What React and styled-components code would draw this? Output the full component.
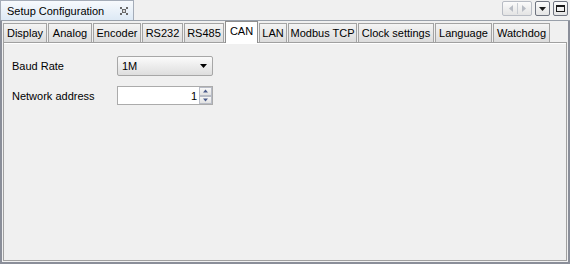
import styled, { createGlobalStyle } from 'styled-components';

const GlobalStyle = createGlobalStyle`
  html, body {
    margin: 0;
    padding: 0;
    background: #f0f0f0;
  }
  body {
    font-family: "Liberation Sans", Arial, sans-serif;
    font-size: 11px;
    color: #000;
  }
`;

const TABS = [
  { label: 'Display', width: 44 },
  { label: 'Analog', width: 44 },
  { label: 'Encoder', width: 48 },
  { label: 'RS232', width: 41 },
  { label: 'RS485', width: 40 },
  { label: 'CAN', width: 33 },
  { label: 'LAN', width: 28 },
  { label: 'Modbus TCP', width: 69 },
  { label: 'Clock settings', width: 76 },
  { label: 'Language', width: 57 },
  { label: 'Watchdog', width: 57 },
];

const StyledView = styled.div`
  display: flex;
  flex-direction: column;
  height: 264px;
  width: 570px;
  box-sizing: border-box;
`;

const StyledHeader = styled.div`
  align-items: flex-end;
  border-bottom: 1px solid #99a0aa;
  display: flex;
  height: 21px;
  box-sizing: border-box;
  justify-content: space-between;
`;

const StyledViewTab = styled.div`
  align-items: center;
  background: linear-gradient(#f7fafd, #dde9f5);
  border: 1px solid #a4acb8;
  border-bottom: none;
  box-sizing: border-box;
  display: flex;
  height: 20px;
  justify-content: space-between;
  padding: 0 5px 0 6px;
  width: 134px;
  white-space: nowrap;
`;

const StyledClose = styled.svg`
  display: block;
`;

const StyledToolbar = styled.div`
  align-self: flex-start;
  display: flex;
  gap: 3px;
  padding: 1px 2px 0 0;
`;

const StyledToolButton = styled.div`
  align-items: center;
  background: linear-gradient(#fbfbfb, #e4e4e4);
  border: 1px solid ${({ $disabled }) => ($disabled ? '#b8bcc4' : '#6f7480')};
  border-radius: 2px;
  box-sizing: border-box;
  display: flex;
  height: 15px;
  justify-content: center;
  width: ${({ $wide }) => ($wide ? '30px' : '15px')};
`;

const StyledDivider = styled.span`
  background: #c8ccd2;
  height: 11px;
  margin: 0 4px;
  width: 1px;
`;

const StyledBody = styled.div`
  border-left: 2px solid #8a8e99;
  border-right: 2px solid #8a8e99;
  border-bottom: 2px solid #8a8e99;
  box-sizing: border-box;
  display: flex;
  flex: 1;
  flex-direction: column;
  padding: 0 1px;
`;

const StyledTabBar = styled.div`
  align-items: flex-end;
  display: flex;
  gap: 1px;
  height: 21px;
`;

const StyledTab = styled.div`
  align-items: center;
  background: ${({ $active }) => ($active ? '#fff' : 'linear-gradient(#f4f4f4, #dcdcdc)')};
  border: 1px solid ${({ $active }) => ($active ? '#8f8f8f' : '#a3a3a3')};
  border-bottom: none;
  box-sizing: border-box;
  display: flex;
  flex-shrink: 0;
  height: ${({ $active }) => ($active ? '22px' : '19px')};
  justify-content: center;
  margin-bottom: ${({ $active }) => ($active ? '-1px' : '0')};
  padding-bottom: ${({ $active }) => ($active ? '3px' : '0')};
  position: relative;
  white-space: nowrap;
  width: ${({ $width }) => $width}px;
  z-index: ${({ $active }) => ($active ? 1 : 0)};
`;

const StyledPanel = styled.div`
  align-content: start;
  background: #f0f0f0;
  border: 1px solid #a0a0a0;
  box-shadow: inset 0 1px 0 #fff;
  box-sizing: border-box;
  display: grid;
  flex: 1;
  grid-auto-rows: 20px;
  grid-template-columns: 105px 96px;
  margin-bottom: 1px;
  padding: 13px 0 0 8px;
  row-gap: 10px;
`;

const StyledLabel = styled.label`
  align-self: center;
`;

const StyledCombo = styled.div`
  align-items: center;
  background: linear-gradient(#fbfbfb, #dedede);
  border: 1px solid #a7a7a7;
  border-radius: 2px;
  box-sizing: border-box;
  display: flex;
  justify-content: space-between;
  padding: 0 5px 0 4px;
`;

const StyledSpinner = styled.div`
  background: #fff;
  border: 1px solid #ababab;
  box-sizing: border-box;
  display: flex;
  height: 19px;
`;

const StyledSpinnerValue = styled.div`
  align-items: center;
  display: flex;
  flex: 1;
  justify-content: flex-end;
  padding-right: 2px;
`;

const StyledSpinnerButtons = styled.div`
  display: flex;
  flex-direction: column;
  width: 13px;
`;

const StyledSpinnerButton = styled.div`
  align-items: center;
  background: linear-gradient(#f8f8f8, #e2e2e2);
  border: 1px solid #b8bcc6;
  box-sizing: border-box;
  display: flex;
  flex: 1;
  justify-content: center;
`;

function Arrow({ dir, color = '#000', size = 7 }) {
  const points = {
    down: '0,0 7,0 3.5,4',
    up: '0,4 7,4 3.5,0',
    left: '4,0 4,7 0,3.5',
    right: '0,0 0,7 4,3.5',
  }[dir];
  const vertical = dir === 'up' || dir === 'down';
  return (
    <svg width={vertical ? size : 4} height={vertical ? 4 : size} viewBox={vertical ? '0 0 7 4' : '0 0 4 7'}>
      <polygon points={points} fill={color} />
    </svg>
  );
}

function App() {
  return (
    <StyledView>
      <GlobalStyle />
      <StyledHeader>
        <StyledViewTab>
          <span>Setup Configuration</span>
          <StyledClose width="8" height="8" viewBox="0 0 8 8">
            <path d="M0 0h2v2H0zM6 0h2v2H6zM2 2h4v4H2zM0 6h2v2H0zM6 6h2v2H6z" fill="#6a6a6a" />
            <path d="M3 3h2v2H3z" fill="#d8d8d8" />
          </StyledClose>
        </StyledViewTab>
        <StyledToolbar>
          <StyledToolButton $wide $disabled>
            <Arrow dir="left" color="#b8bcc4" />
            <StyledDivider />
            <Arrow dir="right" color="#b8bcc4" />
          </StyledToolButton>
          <StyledToolButton>
            <Arrow dir="down" color="#1a1a1a" />
          </StyledToolButton>
          <StyledToolButton>
            <svg width="9" height="7" viewBox="0 0 9 7">
              <rect x="0.5" y="0.5" width="8" height="6" fill="none" stroke="#1a1a1a" />
              <rect x="0" y="0" width="9" height="2" fill="#1a1a1a" />
            </svg>
          </StyledToolButton>
        </StyledToolbar>
      </StyledHeader>

      <StyledBody>
        <StyledTabBar>
          {TABS.map((tab) => (
            <StyledTab key={tab.label} $active={tab.label === 'CAN'} $width={tab.width}>
              {tab.label}
            </StyledTab>
          ))}
        </StyledTabBar>

        <StyledPanel>
          <StyledLabel>Baud Rate</StyledLabel>
          <StyledCombo>
            <span>1M</span>
            <Arrow dir="down" />
          </StyledCombo>
          <StyledLabel>Network address</StyledLabel>
          <StyledSpinner>
            <StyledSpinnerValue>1</StyledSpinnerValue>
            <StyledSpinnerButtons>
              <StyledSpinnerButton>
                <Arrow dir="up" color="#4a5a8a" size={5} />
              </StyledSpinnerButton>
              <StyledSpinnerButton>
                <Arrow dir="down" color="#4a5a8a" size={5} />
              </StyledSpinnerButton>
            </StyledSpinnerButtons>
          </StyledSpinner>
        </StyledPanel>
      </StyledBody>
    </StyledView>
  );
}

export default App;
